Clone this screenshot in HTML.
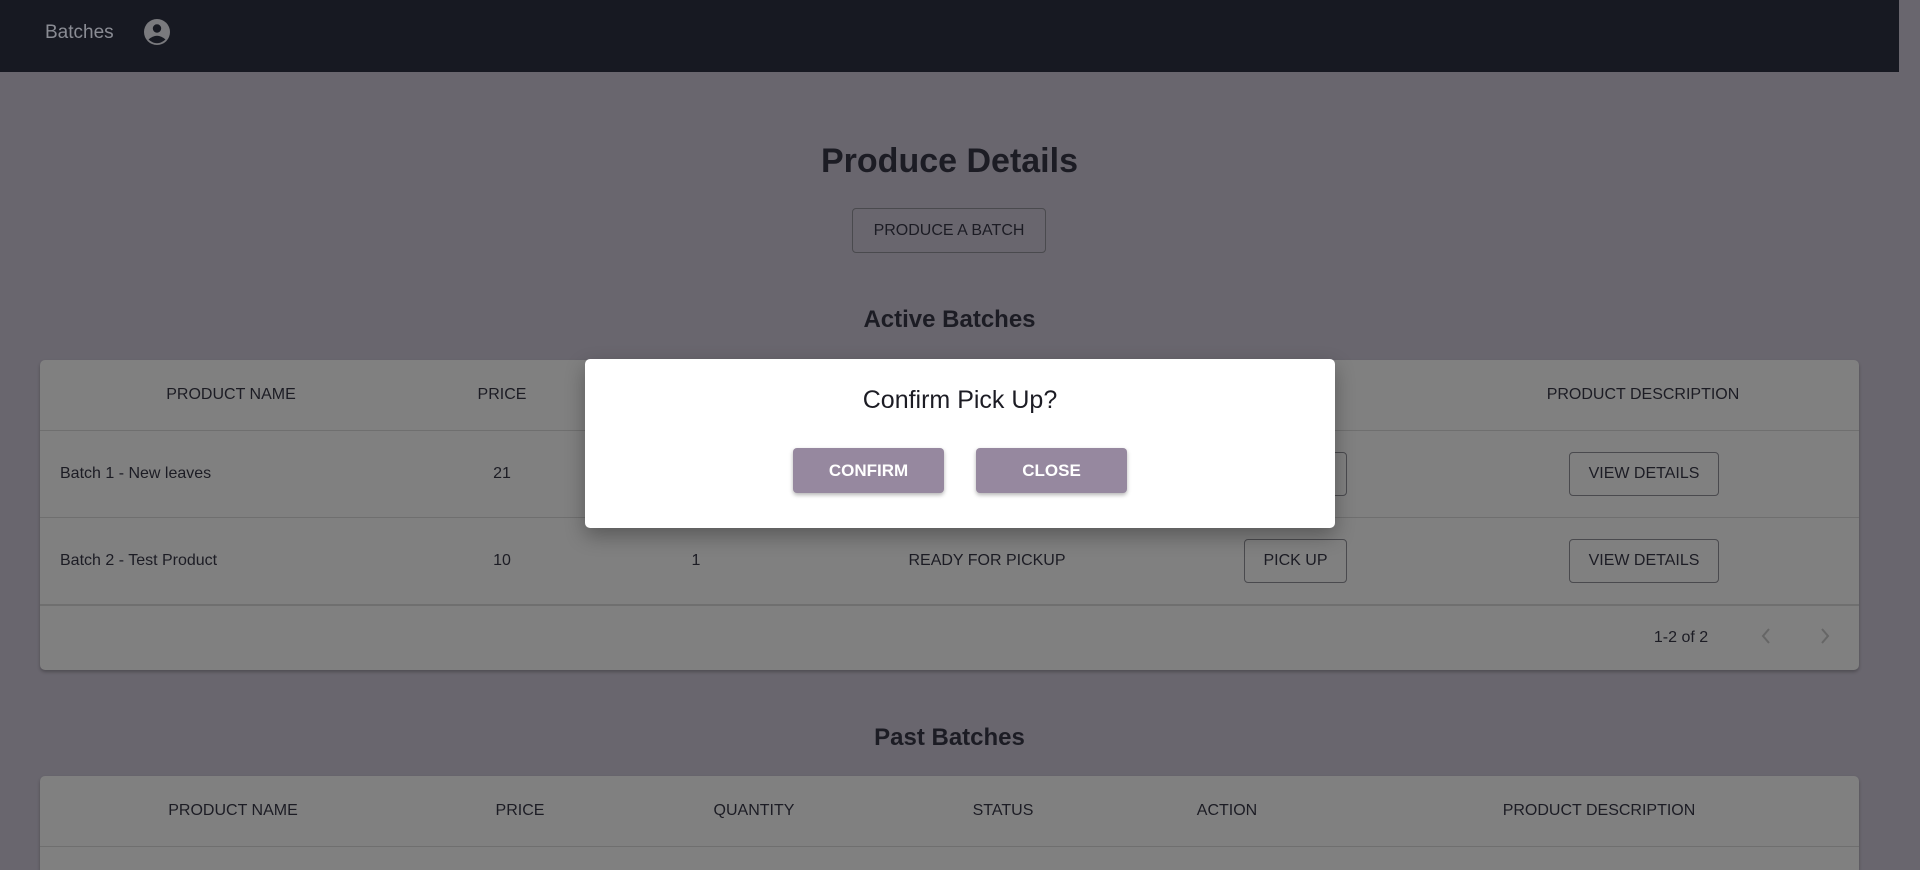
<!DOCTYPE html>
<html style="width:1920px;height:870px;overflow:hidden"><head><meta charset="utf-8"><style>
*{box-sizing:border-box;margin:0;padding:0}
body{width:1920px;height:870px;overflow:hidden;background:#69666e;font-family:"Liberation Sans",sans-serif;position:relative;color:#1c1c24}
.nav{position:absolute;left:0;top:0;width:1899px;height:72px;background:#171922}
.nav .t{position:absolute;left:45px;top:22px;font-size:19px;color:#8a8c94}
.nav svg{position:absolute;left:144px;top:19px}
.abs{position:absolute}
h1{position:absolute;left:0;width:1899px;text-align:center;top:142px;font-size:34px;font-weight:bold;color:#1c1c24}
h2{position:absolute;left:0;width:1899px;text-align:center;font-size:24px;font-weight:bold;color:#1c1c24}
.btn{position:absolute;border:1px solid #4a4a4e;border-radius:4px;display:flex;align-items:center;justify-content:center;font-size:16px;color:#1c1c24}
.card{position:absolute;left:40px;width:1819px;background:#808080;border-radius:5px;box-shadow:0 2px 3px rgba(0,0,0,.25);overflow:hidden}
.line{position:absolute;left:0;right:0;height:1px;background:#6f6f6f}
.c{position:absolute;font-size:16px;transform:translateX(-50%);white-space:nowrap;color:#1c1c24}
.modal{position:absolute;left:585px;top:359px;width:750px;height:169px;background:#fff;border-radius:5px;box-shadow:0 8px 20px rgba(0,0,0,.3)}
.mb{position:absolute;top:89px;height:45px;width:151px;background:#96889f;border-radius:4px;color:#fff;font-weight:bold;font-size:17px;display:flex;align-items:center;justify-content:center;box-shadow:0 2px 4px rgba(0,0,0,.3)}
</style></head><body>
<div class="nav"><span class="t">Batches</span>
<svg width="26" height="26" viewBox="0 0 26 26"><circle cx="13" cy="13" r="13" fill="#7a7a7e"/><circle cx="13" cy="9.5" r="4.2" fill="#171922"/><path d="M4.5 20.5 Q13 13 21.5 20.5 Q13 28 4.5 20.5Z" fill="#171922"/></svg></div>
<h1>Produce Details</h1>
<div class="btn" style="left:852px;top:208px;width:194px;height:45px">PRODUCE A BATCH</div>
<h2 style="top:306px">Active Batches</h2>
<div class="card" style="top:360px;height:310px">
<div class="c" style="left:191px;top:26px">PRODUCT NAME</div>
<div class="c" style="left:462px;top:26px">PRICE</div>
<div class="c" style="left:656px;top:26px">QUANTITY</div>
<div class="c" style="left:947px;top:26px">STATUS</div>
<div class="c" style="left:1256px;top:26px">ACTION</div>
<div class="c" style="left:1603px;top:26px">PRODUCT DESCRIPTION</div>
<div class="line" style="top:70px"></div>
<div class="abs" style="left:20px;top:105px;font-size:16px">Batch 1 - New leaves</div>
<div class="c" style="left:462px;top:105px">21</div>
<div class="btn" style="left:1204px;top:92px;width:103px;height:44px">PICK UP</div>
<div class="btn" style="left:1529px;top:92px;width:150px;height:44px">VIEW DETAILS</div>
<div class="line" style="top:157px"></div>
<div class="abs" style="left:20px;top:192px;font-size:16px">Batch 2 - Test Product</div>
<div class="c" style="left:462px;top:192px">10</div>
<div class="c" style="left:656px;top:192px">1</div>
<div class="c" style="left:947px;top:192px">READY FOR PICKUP</div>
<div class="btn" style="left:1204px;top:179px;width:103px;height:44px">PICK UP</div>
<div class="btn" style="left:1529px;top:179px;width:150px;height:44px">VIEW DETAILS</div>
<div class="line" style="top:244px;height:2px"></div>
<div class="c" style="left:1641px;top:269px">1-2 of 2</div>
<svg class="abs" style="left:1720px;top:267px" width="12" height="18" viewBox="0 0 12 18"><path d="M9 2 L3 9 L9 16" fill="none" stroke="#666" stroke-width="2"/></svg>
<svg class="abs" style="left:1779px;top:267px" width="12" height="18" viewBox="0 0 12 18"><path d="M3 2 L9 9 L3 16" fill="none" stroke="#666" stroke-width="2"/></svg>
</div>
<h2 style="top:724px">Past Batches</h2>
<div class="card" style="top:776px;height:94px;border-radius:5px 5px 0 0">
<div class="c" style="left:193px;top:26px">PRODUCT NAME</div>
<div class="c" style="left:480px;top:26px">PRICE</div>
<div class="c" style="left:714px;top:26px">QUANTITY</div>
<div class="c" style="left:963px;top:26px">STATUS</div>
<div class="c" style="left:1187px;top:26px">ACTION</div>
<div class="c" style="left:1559px;top:26px">PRODUCT DESCRIPTION</div>
<div class="line" style="top:70px"></div>
</div>
<div class="modal">
<div class="abs" style="left:0;width:750px;text-align:center;top:27px;font-size:25px;color:#1c1c24">Confirm Pick Up?</div>
<div class="mb" style="left:208px">CONFIRM</div>
<div class="mb" style="left:391px">CLOSE</div>
</div>
</body></html>
